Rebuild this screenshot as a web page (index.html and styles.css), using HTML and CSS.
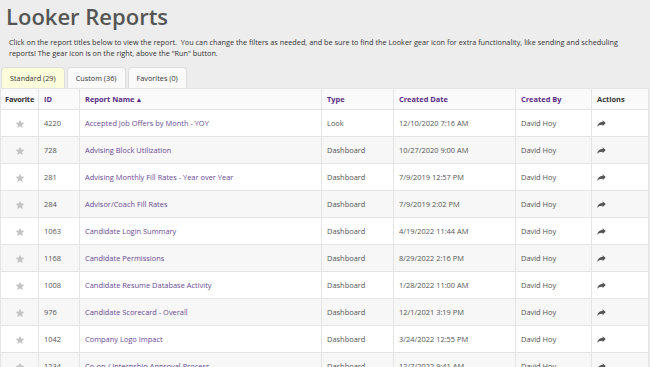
FILE: index.html
```html
<!DOCTYPE html>
<html lang="en">
<head>
  <meta charset="UTF-8">
  <title>Looker Reports</title>
  <link rel="stylesheet" href="styles.css">
</head>
<body>

<h1 class="page-title">Looker Reports</h1>
<p class="intro">Click on the report titles below to view the report.&nbsp; You can change the filters as needed, and be sure to find the Looker gear icon for extra functionality, like sending and scheduling reports! The gear icon is on the right, above the "Run" button.</p>

<!-- Tabs -->
<ul class="tabs">
  <li class="tab active">Standard (29)</li>
  <li class="tab">Custom (36)</li>
  <li class="tab">Favorites (0)</li>
</ul>

<table class="reports">
  <thead>
    <tr>
      <th class="col-fav plain">Favorite</th>
      <th class="col-id">ID</th>
      <th class="col-name">Report Name<span class="sort">&#9650;</span></th>
      <th class="col-type">Type</th>
      <th class="col-date">Created Date</th>
      <th class="col-by">Created By</th>
      <th class="col-act plain">Actions</th>
    </tr>
  </thead>
  <tbody id="rows"></tbody>
</table>

<script>
  const reports = [
    ['4220', 'Accepted Job Offers by Month - YOY', 'Look', '12/10/2020 7:16 AM'],
    ['728', 'Advising Block Utilization', 'Dashboard', '10/27/2020 9:00 AM'],
    ['281', 'Advising Monthly Fill Rates - Year over Year', 'Dashboard', '7/9/2019 12:57 PM'],
    ['284', 'Advisor/Coach Fill Rates', 'Dashboard', '7/9/2019 2:02 PM'],
    ['1063', 'Candidate Login Summary', 'Dashboard', '4/19/2022 11:44 AM'],
    ['1168', 'Candidate Permissions', 'Dashboard', '8/29/2022 2:16 PM'],
    ['1008', 'Candidate Resume Database Activity', 'Dashboard', '1/28/2022 11:00 AM'],
    ['976', 'Candidate Scorecard - Overall', 'Dashboard', '12/1/2021 3:19 PM'],
    ['1042', 'Company Logo Impact', 'Dashboard', '3/24/2022 12:55 PM'],
    ['1234', 'Co-op / Internship Approval Process', 'Dashboard', '12/7/2022 9:41 AM']
  ];

  const star = '<svg class="star" viewBox="0 0 24 24"><path d="M12 1.5l3.2 6.9 7.3.8-5.4 5 1.5 7.3L12 17.8l-6.6 3.7 1.5-7.3-5.4-5 7.3-.8z"/></svg>';
  const share = '<svg class="share" viewBox="0 0 16 14"><path d="M15.5 5.2L10 0.5v2.8C5 3.4 1 5.8 0.5 12.5c1.6-3 4.4-4.4 9.5-4.3v2.9z"/></svg>';

  let html = '';
  reports.forEach(function (r) {
    html += '<tr>' +
      '<td class="fav">' + star + '</td>' +
      '<td>' + r[0] + '</td>' +
      '<td><a href="#">' + r[1] + '</a></td>' +
      '<td>' + r[2] + '</td>' +
      '<td>' + r[3] + '</td>' +
      '<td>David Hoy</td>' +
      '<td>' + share + '</td>' +
      '</tr>';
  });
  document.getElementById('rows').innerHTML = html;
</script>

</body>
</html>
```

FILE: styles.css
```css
body { margin: 0; background: #ededed; font-family: "Open Sans", "Noto Sans", sans-serif; color: #555; }
.page-title { margin: 0; padding: 1px 0 0 6px; font-size: 22px; font-weight: 600; line-height: 30px; color: #555; }
.intro { margin: 6px 0 0 9px; width: 630px; font-size: 7.3px; line-height: 11px; color: #333; }
.tabs { list-style: none; margin: 8px 0 0 1px; padding: 0; display: flex; gap: 2px; }
.tab { height: 20px; line-height: 20px; padding: 0 8px; font-size: 7.3px; color: #333; background: #fafafa; border: 1px solid #ddd; border-bottom: none; border-radius: 4px 4px 0 0; }
.tab.active { background: #fdfddc; }
.reports { width: 647px; border-collapse: collapse; table-layout: fixed; background: #fff; font-size: 7.45px; }
.reports th, .reports td { border: 1px solid #e4e4e4; padding: 0 5px; text-align: left; white-space: nowrap; overflow: hidden; }
.reports th { height: 20px; font-weight: 700; color: #5b2a86; background: #fafafa; }
.reports th.plain { color: #333; }
.reports th.col-fav { padding: 0 0 0 4px; letter-spacing: -0.2px; }
.reports td { height: 26px; color: #555; }
.reports tbody tr:nth-child(even) td { background: #f7f7f7; }
.reports a { color: #6a4a93; text-decoration: none; }
.sort { font-size: 7px; margin-left: 1px; }
.col-fav { width: 33px; }
.col-id { width: 30px; }
.col-name { width: 231px; }
.col-type { width: 61px; }
.col-date { width: 111px; }
.col-by { width: 65px; }
.col-act { width: 46px; }
.fav { text-align: center !important; }
.star { width: 10px; height: 10px; fill: #c4c4c4; vertical-align: middle; }
.share { width: 9px; height: 8px; fill: #555; vertical-align: middle; }
```
